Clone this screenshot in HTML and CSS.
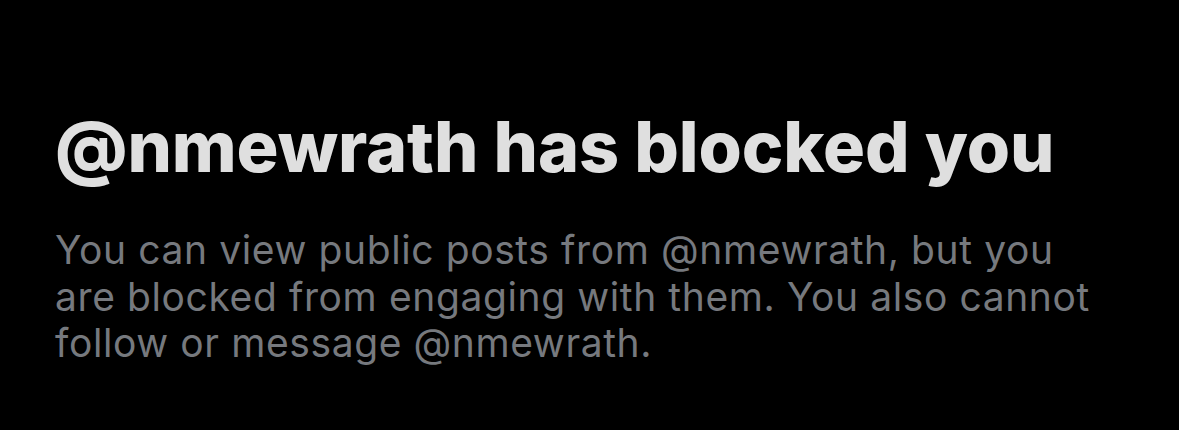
FILE: index.html
```html
<!DOCTYPE html>
<html>
<head>
<meta charset="utf-8">
<link rel="stylesheet" href="styles.css">
</head>
<body>
<main class="blocked">
  <h1 class="title">@nmewrath has blocked you</h1>
  <p class="desc">You can view public posts from @nmewrath, but you are blocked from engaging with them. You also cannot follow or message @nmewrath.</p>
</main>
</body>
</html>
```
FILE: styles.css
```css
html, body {
  margin: 0;
  padding: 0;
  background: #000;
  height: 100%;
}
.blocked {
  padding: 107px 56px 0 55px;
  display: flex;
  flex-direction: column;
}
.title {
  margin: 0;
  font-family: Inter, "Liberation Sans", sans-serif;
  font-weight: 800;
  font-size: 70px;
  line-height: 80px;
  color: #dfdfdf;
  letter-spacing: -0.1px;
  white-space: nowrap;
}
.desc {
  margin: 40px 0 0;
  width: 1060px;
  font-family: Inter, "Liberation Sans", sans-serif;
  font-weight: 400;
  font-size: 39px;
  line-height: 46.5px;
  letter-spacing: 0.6px;
  color: #76797e;
}
```
